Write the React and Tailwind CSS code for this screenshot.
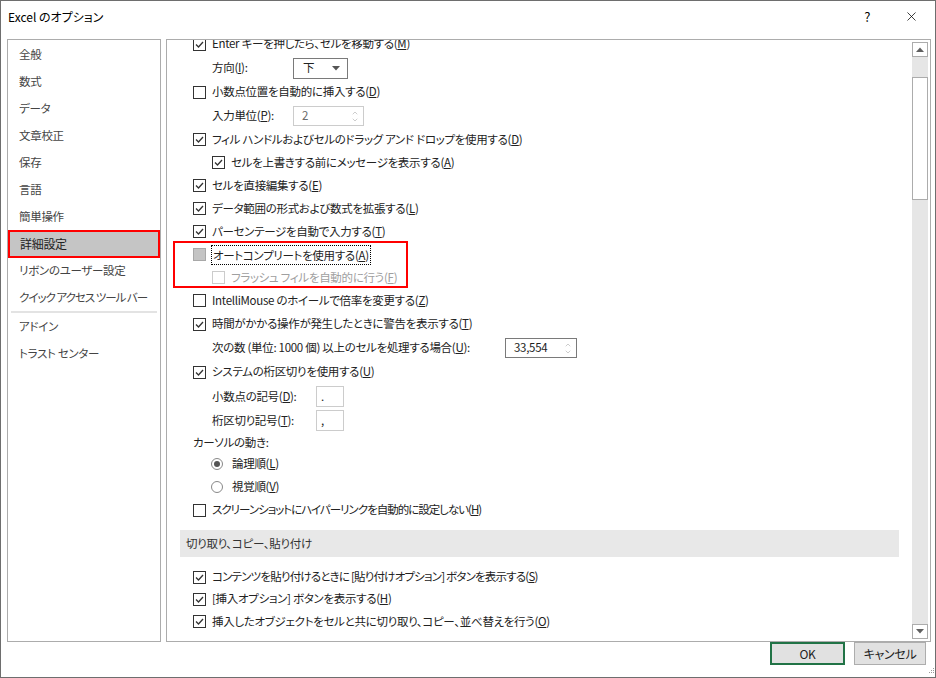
import { X, ChevronUp, ChevronDown } from 'lucide-react';

const font = "font-['Meiryo_UI','Noto_Sans_CJK_JP',sans-serif] [font-feature-settings:'palt']";

const K = ({ t, k }) => (
  <>
    {t}(<span className="underline">{k}</span>)
  </>
);

const Check = ({ checked = true, disabled = false, partial = false }) => (
  <span
    className={`w-[13px] h-[13px] shrink-0 flex items-center justify-center border ${
      disabled ? 'border-[#cccccc] bg-white' : partial ? 'border-[#a8a8a8] bg-[#c4c4c4]' : 'border-[#333333] bg-white'
    }`}
  >
    {checked && (
      <svg width="11" height="11" viewBox="0 0 11 11">
        <path d="M2 5.5 L4.5 8 L9 3" fill="none" stroke="#333" strokeWidth="1.3" />
      </svg>
    )}
  </span>
);

const Radio = ({ on }) => (
  <span className="w-[12px] h-[12px] shrink-0 rounded-full border border-[#888888] bg-white flex items-center justify-center">
    {on && <span className="w-[6px] h-[6px] rounded-full bg-[#555555]" />}
  </span>
);

const Spin = ({ value, disabled, className }) => (
  <div
    className={`flex items-center justify-between border bg-white pl-[8px] pr-[4px] ${
      disabled ? 'border-[#cccccc] text-[#6d6d6d]' : 'border-[#7a7a7a] text-[#222]'
    } ${className}`}
  >
    <span>{value}</span>
    <span className="flex flex-col items-center text-[#9a9a9a]">
      <ChevronUp size={8} strokeWidth={1.5} className="-mb-[1px]" />
      <ChevronDown size={8} strokeWidth={1.5} />
    </span>
  </div>
);

const navItems = [
  { n: '全般' },
  { n: '数式' },
  { n: 'データ' },
  { n: '文章校正' },
  { n: '保存' },
  { n: '言語' },
  { n: '簡単操作' },
  { n: '詳細設定', active: true },
  { n: 'リボンのユーザー設定' },
  { n: 'クイック アクセス ツール バー', tight: true },
];

export default function App() {
  return (
    <div className={`w-[936px] h-[678px] bg-white border border-[#6e6e6e] flex flex-col text-[11.5px] tracking-[-0.3px] text-[#222] ${font}`}>
      {/* title bar */}
      <div className="h-[31px] flex items-center pl-[7px] pr-[16px] shrink-0">
        <span className="text-[12px] tracking-normal text-black">Excel のオプション</span>
        <span className="ml-auto text-[13px] text-black mr-[34px]">?</span>
        <X size={15} strokeWidth={1.2} className="text-black" />
      </div>

      <div className="flex gap-[5px] pl-[6px] pr-[4px] pt-[7px] h-[610px] shrink-0">
        {/* left nav */}
        <div className="w-[154px] h-[603px] border border-[#acacac] pt-[1px] whitespace-nowrap">
          {navItems.map(({ n, active, tight }) =>
            active ? (
              <div key={n} className="h-[28px] -my-[0.5px] border-2 border-[#ff0000] bg-[#c5c5c5] flex items-center pl-[10px] text-[#222] text-[12px]">
                {n}
              </div>
            ) : (
              <div key={n} className={`h-[27px] flex items-center pl-[11px] text-[#444] ${tight ? 'tracking-[-1px]' : ''}`}>
                {n}
              </div>
            )
          )}
          <div className="h-[2px] mx-[3px] bg-[#e3e3e3]" />
          {['アドイン', 'トラスト センター'].map((n) => (
            <div key={n} className="h-[27px] flex items-center pl-[11px] text-[#444]">
              {n}
            </div>
          ))}
        </div>

        {/* right content */}
        <div className="w-[765px] h-[603px] border border-[#acacac] flex">
          <div className="flex-1 overflow-hidden whitespace-nowrap">
            <div className="-mt-[8px] pl-[26px] pr-[13px]">
              <div className="h-[24px] flex items-center gap-[6px]">
                <Check />
                <span><K t="Enter キーを押したら、セルを移動する" k="M" /></span>
              </div>
              <div className="h-[24px] flex items-center pl-[19px]">
                <span className="w-[81px]"><K t="方向" k="I" />:</span>
                <div className="w-[55px] h-[21px] border border-[#7a7a7a] flex items-center justify-between pl-[9px] pr-[7px]">
                  <span>下</span>
                  <svg width="8" height="5" viewBox="0 0 8 5"><path d="M0 0 H8 L4 4.5 Z" fill="#555" /></svg>
                </div>
              </div>
              <div className="h-[24px] flex items-center gap-[6px]">
                <Check checked={false} />
                <span><K t="小数点位置を自動的に挿入する" k="D" /></span>
              </div>
              <div className="h-[24px] flex items-center pl-[19px]">
                <span className="w-[81px]"><K t="入力単位" k="P" />:</span>
                <Spin value="2" disabled className="w-[71px] h-[20px]" />
              </div>
              <div className="h-[23px] flex items-center gap-[6px]">
                <Check />
                <span><K t="フィル ハンドルおよびセルのドラッグ アンド ドロップを使用する" k="D" /></span>
              </div>
              <div className="h-[23px] flex items-center gap-[6px] pl-[19px]">
                <Check />
                <span><K t="セルを上書きする前にメッセージを表示する" k="A" /></span>
              </div>
              <div className="h-[23px] flex items-center gap-[6px]">
                <Check />
                <span><K t="セルを直接編集する" k="E" /></span>
              </div>
              <div className="h-[23px] flex items-center gap-[6px]">
                <Check />
                <span><K t="データ範囲の形式および数式を拡張する" k="L" /></span>
              </div>
              <div className="h-[23px] flex items-center gap-[6px]">
                <Check />
                <span><K t="パーセンテージを自動で入力する" k="T" /></span>
              </div>

              {/* highlighted group */}
              <div className="relative">
                <div className="absolute -left-[20px] top-[-2px] w-[235px] h-[47px] border-2 border-[#ff0000] pointer-events-none" />
                <div className="h-[23px] flex items-center gap-[5px]">
                  <Check checked={false} partial />
                  <span className="border border-dotted border-black px-[1px] leading-[18px]">
                    <K t="オートコンプリートを使用する" k="A" />
                  </span>
                </div>
                <div className="h-[23px] flex items-center gap-[6px] pl-[19px] text-[#a0a0a0]">
                  <Check checked={false} disabled />
                  <span><K t="フラッシュ フィルを自動的に行う" k="F" /></span>
                </div>
              </div>

              <div className="h-[23px] flex items-center gap-[6px]">
                <Check checked={false} />
                <span><K t="IntelliMouse のホイールで倍率を変更する" k="Z" /></span>
              </div>
              <div className="h-[24px] flex items-center gap-[6px]">
                <Check />
                <span><K t="時間がかかる操作が発生したときに警告を表示する" k="T" /></span>
              </div>
              <div className="h-[24px] flex items-center pl-[19px]">
                <span className="w-[293px]"><K t="次の数 (単位: 1000 個) 以上のセルを処理する場合" k="U" />:</span>
                <Spin value="33,554" className="w-[72px] h-[20px]" />
              </div>
              <div className="h-[24px] flex items-center gap-[6px]">
                <Check />
                <span><K t="システムの桁区切りを使用する" k="U" /></span>
              </div>
              <div className="h-[25px] flex items-center pl-[19px]">
                <span className="w-[104px]"><K t="小数点の記号" k="D" />:</span>
                <div className="w-[28px] h-[21px] border border-[#cccccc] flex items-center pl-[4px]">.</div>
              </div>
              <div className="h-[23px] flex items-center pl-[19px]">
                <span className="w-[104px]"><K t="桁区切り記号" k="T" />:</span>
                <div className="w-[28px] h-[21px] border border-[#cccccc] flex items-center pl-[4px]">,</div>
              </div>
              <div className="h-[21px] flex items-center">カーソルの動き:</div>
              <div className="h-[22px] flex items-center gap-[9px] pl-[18px]">
                <Radio on />
                <span><K t="論理順" k="L" /></span>
              </div>
              <div className="h-[24px] flex items-center gap-[9px] pl-[18px]">
                <Radio />
                <span><K t="視覚順" k="V" /></span>
              </div>
              <div className="h-[22px] flex items-center gap-[6px]">
                <Check checked={false} />
                <span className="tracking-[-1px]"><K t="スクリーンショットにハイパーリンクを自動的に設定しない" k="H" /></span>
              </div>
            </div>

            <div className="mt-[9px] mx-[13px] h-[27px] bg-[#e8e8e8] flex items-center pl-[6px] text-[#333]">
              切り取り、コピー、貼り付け
            </div>

            <div className="mt-[9px] pl-[26px]">
              <div className="h-[22px] flex items-center gap-[6px]">
                <Check />
                <span className="tracking-[-0.8px]">コンテンツを貼り付けるときに [貼り付けオプション] ボタンを表示する(<span className="underline">S</span>)</span>
              </div>
              <div className="h-[22px] flex items-center gap-[6px]">
                <Check />
                <span>[挿入オプション] ボタンを表示する(<span className="underline">H</span>)</span>
              </div>
              <div className="h-[23px] flex items-center gap-[6px]">
                <Check />
                <span><K t="挿入したオブジェクトをセルと共に切り取り、コピー、並べ替えを行う" k="O" /></span>
              </div>
            </div>
          </div>

          {/* scrollbar */}
          <div className="w-[16px] mr-[2px] my-[2px] bg-[#e6e6e6] flex flex-col">
            <div className="h-[15px] border border-[#acacac] bg-white flex items-center justify-center">
              <svg width="8" height="5" viewBox="0 0 8 5"><path d="M0 5 H8 L4 0.5 Z" fill="#606060" /></svg>
            </div>
            <div className="h-[20px]" />
            <div className="h-[123px] border border-[#acacac] bg-white" />
            <div className="flex-1" />
            <div className="h-[15px] border border-[#acacac] bg-white flex items-center justify-center">
              <svg width="8" height="5" viewBox="0 0 8 5"><path d="M0 0 H8 L4 4.5 Z" fill="#606060" /></svg>
            </div>
          </div>
        </div>
      </div>

      {/* buttons */}
      <div className="flex justify-end gap-[9px] pr-[9px] relative">
        <button className="w-[75px] h-[23px] border-2 border-[#217346] bg-[#e1e1e1] text-[#222] text-[12px]">OK</button>
        <button className="w-[72px] h-[23px] border border-[#adadad] bg-[#e1e1e1] text-[#222] text-[12px]">キャンセル</button>
        <div className="absolute right-[1px] bottom-[-8px] grid grid-cols-3 gap-[1px]">
          {[0, 1, 2, 3, 4, 5, 6, 7, 8].map((i) => (
            <span key={i} className={`w-[1px] h-[1px] ${i === 2 || i === 4 || i === 5 || i >= 6 ? 'bg-[#9a9a9a]' : ''}`} />
          ))}
        </div>
      </div>
    </div>
  );
}
